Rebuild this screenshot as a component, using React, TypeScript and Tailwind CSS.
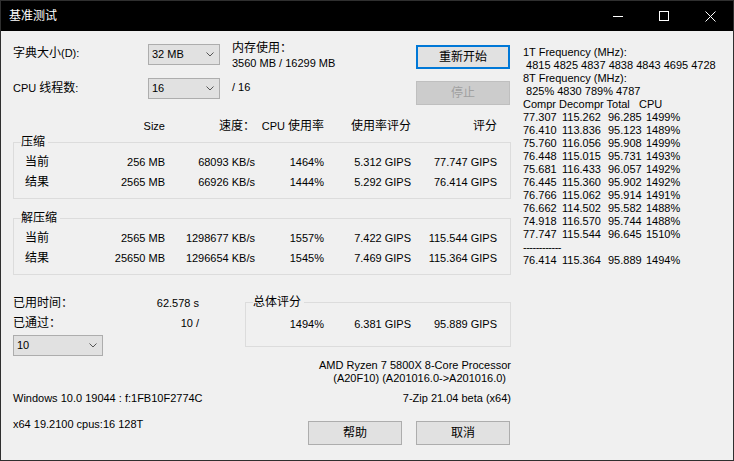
import type { ReactNode } from "react"

function Zh({ children }: { children: ReactNode }) {
    return <span className="text-[12px]">{children}</span>
}

function Combo({ value, width }: { value: string; width: string }) {
    return (
        <div className={`flex items-center justify-between h-[21px] border border-[#adadad] bg-[#e1e1e1] pl-[3px] pr-[5px] ${width}`}>
            <span className="leading-[19px]">{value}</span>
            <svg width="8" height="5" viewBox="0 0 8 5">
                <path d="M0.5 0.5 L4 4 L7.5 0.5" stroke="#555" fill="none" strokeWidth="1" />
            </svg>
        </div>
    )
}

function Button({ label, primary, disabled }: { label: string; primary?: boolean; disabled?: boolean }) {
    const look = primary
        ? "border-2 border-[#0078d7] bg-[#e1e1e1] text-black"
        : disabled
            ? "border border-[#bfbfbf] bg-[#cccccc] text-[#a0a0a0]"
            : "border border-[#adadad] bg-[#e1e1e1] text-black"
    return (
        <div className={`flex items-center justify-center w-[94px] h-[24px] text-[12px] ${look}`}>
            {label}
        </div>
    )
}

function Group({ label, className, children }: { label: string; className?: string; children: ReactNode }) {
    return (
        <div className={`relative border border-[#dcdcdc] ${className ?? ""}`}>
            <span className="absolute -top-[9px] left-[7px] bg-[#f0f0f0] pr-[3px] text-[12px] leading-[16px]">{label}</span>
            {children}
        </div>
    )
}

const cols = "grid grid-cols-[70px_70px_90px_69px_87px_86px] leading-[20px] text-right"

type Row = [string, string, string, string, string, string]

const compress: Row[] = [
    ["当前", "256 MB", "68093 KB/s", "1464%", "5.312 GIPS", "77.747 GIPS"],
    ["结果", "2565 MB", "66926 KB/s", "1444%", "5.292 GIPS", "76.414 GIPS"],
]

const decompress: Row[] = [
    ["当前", "2565 MB", "1298677 KB/s", "1557%", "7.422 GIPS", "115.544 GIPS"],
    ["结果", "25650 MB", "1296654 KB/s", "1545%", "7.469 GIPS", "115.364 GIPS"],
]

const passes = [
    ["77.307", "115.262", "96.285", "1499%"],
    ["76.410", "113.836", "95.123", "1489%"],
    ["75.760", "116.056", "95.908", "1499%"],
    ["76.448", "115.015", "95.731", "1493%"],
    ["75.681", "116.433", "96.057", "1492%"],
    ["76.445", "115.360", "95.902", "1492%"],
    ["76.766", "115.062", "95.914", "1491%"],
    ["76.662", "114.502", "95.582", "1488%"],
    ["74.918", "116.570", "95.744", "1488%"],
    ["77.747", "115.544", "96.645", "1510%"],
]

function TableRows({ rows }: { rows: Row[] }) {
    return (
        <div className="pl-[11px]">
            {rows.map((r) => (
                <div key={r[0]} className={cols}>
                    <span className="text-left"><Zh>{r[0]}</Zh></span>
                    {r.slice(1).map((v, i) => <span key={i}>{v}</span>)}
                </div>
            ))}
        </div>
    )
}

function PassRow({ v }: { v: string[] }) {
    return (
        <div className="grid grid-cols-[39px_46px_38px_auto]">
            {v.map((x, i) => <span key={i}>{x}</span>)}
        </div>
    )
}

export default function App() {
    return (
        <div className="w-[734px] h-[461px] border border-[#2f2f2f] bg-[#f0f0f0] text-black text-[11px] font-['Liberation_Sans','Noto_Sans_CJK_SC',sans-serif] overflow-hidden">
            {/* title bar */}
            <div className="flex h-[30px] bg-black text-white">
                <div className="pl-[8px] flex items-center text-[12px]">基准测试</div>
                <div className="ml-auto flex">
                    <div className="w-[46px] flex items-center justify-center">
                        <div className="w-[10px] h-px bg-white" />
                    </div>
                    <div className="w-[46px] flex items-center justify-center">
                        <div className="w-[10px] h-[10px] border border-white" />
                    </div>
                    <div className="w-[46px] flex items-center justify-center">
                        <svg width="11" height="11" viewBox="0 0 11 11">
                            <path d="M0.5 0.5 L10.5 10.5 M10.5 0.5 L0.5 10.5" stroke="white" strokeWidth="1" />
                        </svg>
                    </div>
                </div>
            </div>

            <div className="flex pt-[12px]">
                {/* left column */}
                <div className="w-[510px] pl-[12px] flex flex-col">
                    <div className="flex h-[35px] items-start">
                        <div className="w-[135px] leading-[20px]"><Zh>字典大小</Zh>(D):</div>
                        <div className="mt-[1px]"><Combo value="32 MB" width="w-[72px]" /></div>
                        <div className="ml-[12px] w-[184px] -mt-[2px] leading-[15px]">
                            <div><Zh>内存使用：</Zh></div>
                            <div>3560 MB / 16299 MB</div>
                        </div>
                        <div className="mt-[2px]"><Button label="重新开始" primary /></div>
                    </div>
                    <div className="flex h-[27px] items-start">
                        <div className="w-[135px] leading-[20px]">CPU <Zh>线程数</Zh>:</div>
                        <Combo value="16" width="w-[72px]" />
                        <div className="ml-[12px] w-[184px] -mt-[1px] leading-[20px]">/ 16</div>
                        <div className="mt-[3px]"><Button label="停止" disabled /></div>
                    </div>

                    <div className={`${cols} mt-[11px] pl-[12px]`}>
                        <span />
                        <span>Size</span>
                        <span><Zh>速度：</Zh></span>
                        <span>CPU <Zh>使用率</Zh></span>
                        <span><Zh>使用率评分</Zh></span>
                        <span><Zh>评分</Zh></span>
                    </div>

                    <Group label="压缩" className="mt-[6px] pt-[9px] pb-[6px]">
                        <TableRows rows={compress} />
                    </Group>
                    <Group label="解压缩" className="mt-[19px] pt-[9px] pb-[6px]">
                        <TableRows rows={decompress} />
                    </Group>

                    <div className="flex items-start mt-[18px]">
                        <div className="w-[186px] leading-[20px]">
                            <div className="flex justify-between"><Zh>已用时间：</Zh><span>62.578 s</span></div>
                            <div className="flex justify-between"><Zh>已通过：</Zh><span>10 /</span></div>
                            <div className="mt-[2px]"><Combo value="10" width="w-[90px]" /></div>
                        </div>
                        <Group label="总体评分" className="ml-[46px] w-[266px] mt-[9px] pt-[11px] pb-[12px]">
                            <div className="grid grid-cols-[78px_87px_86px] leading-[20px] text-right">
                                <span>1494%</span>
                                <span>6.381 GIPS</span>
                                <span>95.889 GIPS</span>
                            </div>
                        </Group>
                    </div>

                    <div className="mt-[3px] leading-[13px] text-right">
                        <div>AMD Ryzen 7 5800X 8-Core Processor</div>
                        <div className="pr-[5px]">(A20F10) (A201016.0-&gt;A201016.0)</div>
                    </div>

                    <div className="mt-[3px] flex justify-between leading-[20px]">
                        <span>Windows 10.0 19044 : f:1FB10F2774C</span>
                        <span>7-Zip 21.04 beta (x64)</span>
                    </div>

                    <div className="flex items-start">
                        <span className="mt-[6px] leading-[20px]">x64 19.2100 cpus:16 128T</span>
                        <div className="ml-auto mr-px mt-[13px] flex gap-[14px]">
                            <Button label="帮助" />
                            <Button label="取消" />
                        </div>
                    </div>
                </div>

                {/* right panel */}
                <div className="ml-[12px] mt-[3px] leading-[13px] whitespace-pre">
                    <div>1T Frequency (MHz):</div>
                    <div> 4815 4825 4837 4838 4843 4695 4728</div>
                    <div>8T Frequency (MHz):</div>
                    <div> 825% 4830 789% 4787</div>
                    <div>Compr Decompr Total   CPU</div>
                    {passes.map((p, i) => <PassRow key={i} v={p} />)}
                    <div className="tracking-[-0.5px]">------------</div>
                    <PassRow v={["76.414", "115.364", "95.889", "1494%"]} />
                </div>
            </div>
        </div>
    )
}
